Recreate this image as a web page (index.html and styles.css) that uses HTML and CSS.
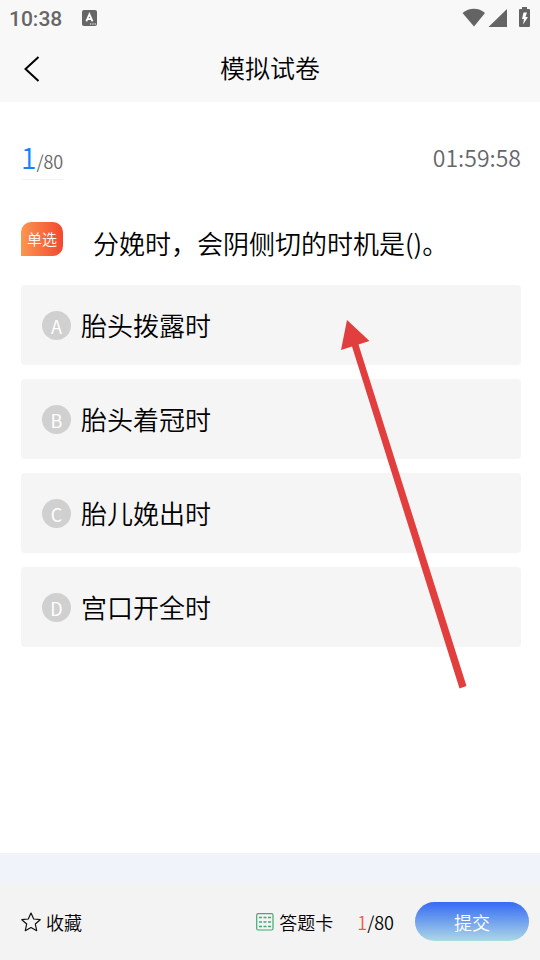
FILE: index.html
```html
<!DOCTYPE html>
<html lang="zh-CN">
  <head>
    <meta charset="utf-8">
    <meta name="viewport" content="width=device-width, initial-scale=1">
    <title>模拟试卷</title>
    <link rel="stylesheet" href="styles.css">
  </head>
  <body>
    <header class="top">
      <div class="status">
        <span class="clock">10:38</span>
        <svg class="keyboard" width="15" height="16" viewBox="0 0 15 16">
          <rect width="15" height="16" rx="2" fill="#666"/>
          <path d="M4.3 11.3 7.4 4.2 10.5 11.3M5.5 9.2H9.3" fill="none" stroke="#fff" stroke-width="1.8"/>
          <path d="M8 14h1.3M10.4 14h1.3M12.6 14h1.3" stroke="#fff" stroke-width="1.2"/>
        </svg>
        <svg class="signals" width="68" height="20" viewBox="0 0 68 20">
          <g fill="#646464">
            <path d="M0.5 5C7-.8 17-.8 23 5L12 18.5z"/>
            <path d="M45 1V19H26.5z"/>
            <path d="M60 -1h5v2h2q1 0 1 1v16q0 1-1 1h-9q-1 0-1-1v-16q0-1 1-1h2z"/>
          </g>
          <path d="M61.5 4.5 60 11H62L61 16.5 66 9H63.5L65 4.5z" fill="#fff"/>
        </svg>
      </div>
      <div class="navbar">
        <button class="back" type="button" aria-label="返回">
          <svg width="16" height="26" viewBox="0 0 16 26">
            <path d="M14.5 1 1.5 13 14.5 25" fill="none" stroke="#000" stroke-width="2"/>
          </svg>
        </button>
        <h1>模拟试卷</h1>
      </div>
    </header>

    <main class="paper">
      <div class="progress">
        <div class="count"><span class="current">1</span>/80</div>
        <div class="timer">01:59:58</div>
      </div>

      <div class="question">
        <span class="badge">单选</span>
        <h2 id="question">分娩时，会阴侧切的时机是()。</h2>
      </div>

      <form class="options" id="answer" role="radiogroup" aria-labelledby="question">
        <label class="option">
          <span class="mark"><input type="radio" name="answer" value="A"><span>A</span></span>
          胎头拨露时
        </label>
        <label class="option">
          <span class="mark"><input type="radio" name="answer" value="B"><span>B</span></span>
          胎头着冠时
        </label>
        <label class="option">
          <span class="mark"><input type="radio" name="answer" value="C"><span>C</span></span>
          胎儿娩出时
        </label>
        <label class="option">
          <span class="mark"><input type="radio" name="answer" value="D"><span>D</span></span>
          宫口开全时
        </label>
      </form>

      <!-- arrow over the options -->
      <svg class="arrow" width="128" height="370" viewBox="0 0 128 370" aria-hidden="true">
        <path d="M7 0 29.5 21 18.5 24.5 126.5 366 119.5 368.5 12 26.5 1 30z" fill="#e33e3e"/>
      </svg>
    </main>

    <footer class="bottom">
      <button class="tool" type="button">
        <svg width="20" height="20" viewBox="0 0 20 20">
          <path d="M10 1 12.7 7 19.2 7.7 14.3 12 15.7 18.7 10 15.5 4.3 18.7 5.7 12 .8 7.7 7.3 7z" fill="none" stroke="#111" stroke-width="1.2" stroke-linejoin="round"/>
        </svg>
        收藏
      </button>
      <button class="tool card" type="button">
        <svg width="18" height="18" viewBox="0 0 18 18">
          <rect x=".7" y=".7" width="16.3" height="16.3" rx="1.5" fill="none" stroke="#42aa74" stroke-width="1.2"/>
          <path d="M3 4.5h12M3 9h12M3 13.5h12" stroke="#42aa74" stroke-width="1.3" stroke-dasharray="3 1.5"/>
        </svg>
        答题卡
      </button>
      <div class="total"><span class="done">1</span>/80</div>
      <button class="submit" type="submit" form="answer">提交</button>
    </footer>
  </body>
</html>
```
FILE: styles.css
```css
* {
  box-sizing: border-box;
}
body {
  margin: 0;
  min-height: 100vh;
  display: flex;
  flex-direction: column;
  background-color: #fff;
  color: #000;
  font-family: "Noto Sans CJK SC", "Noto Sans", sans-serif;
  font-weight: 350;
}
button {
  font: inherit;
  color: inherit;
  border: 0;
  padding: 0;
  background: none;
}
svg {
  display: block;
  flex: none;
  overflow: visible;
}
h1, h2 {
  margin: 0;
  font-weight: inherit;
}

.top {
  background-color: #f8f8f8;
}
.status {
  height: 36px;
  padding: 0 10px 0 9px;
  display: flex;
  align-items: center;
  gap: 20px;
}
.clock {
  font-family: Roboto, sans-serif;
  font-size: 21px;
  font-weight: 500;
  line-height: 24px;
  padding-top: 2px;
  color: #666;
}
.signals {
  margin-left: auto;
}
.navbar {
  height: 66px;
  padding: 0 24px;
  display: grid;
  grid-template-columns: 1fr auto 1fr;
  align-items: center;
}
.navbar h1 {
  font-size: 25px;
  line-height: 36px;
  padding-bottom: 4px;
}
.back {
  justify-self: start;
}

.paper {
  position: relative;
  flex: 1;
  padding: 36px 19px 24px 21px;
}
.progress {
  display: flex;
  justify-content: space-between;
  align-items: flex-start;
}
.count {
  font-size: 18px;
  line-height: 38px;
  height: 42px;
  color: #666;
  border-bottom: 1px solid #f2f2f2;
}
.current {
  font-size: 28px;
  color: #1384ff;
}
.timer {
  font-size: 23px;
  line-height: 38px;
  color: #66676c;
}

.question {
  display: flex;
  align-items: flex-start;
  gap: 30px;
  padding: 42px 0 21px;
}
.badge {
  flex: none;
  width: 42px;
  height: 34px;
  border-radius: 10px 10px 10px 0;
  background: linear-gradient(90deg, #fb9650, #f24830);
  color: #fff;
  font-size: 15px;
  line-height: 34px;
  text-align: center;
}
.question h2 {
  font-size: 26px;
  line-height: 42px;
}

.options {
  display: flex;
  flex-direction: column;
  gap: 14px;
}
.option {
  height: 80px;
  padding: 0 21px;
  display: flex;
  align-items: center;
  gap: 10px;
  border-radius: 4px;
  background-color: #f5f5f5;
  font-size: 26px;
  line-height: 38px;
}
.mark {
  display: grid;
  place-items: center;
  color: #fff;
  font-size: 18px;
  font-weight: 400;
  line-height: 28px;
}
.mark > * {
  grid-area: 1 / 1;
}
.mark span {
  padding-top: 1px;
}
.mark input {
  appearance: none;
  width: 29px;
  height: 29px;
  margin: 0;
  border-radius: 50%;
  background-color: #d0d0d0;
}
.mark input:checked {
  background-color: #1384ff;
}

.arrow {
  position: absolute;
  top: 218px;
  left: 340px;
  pointer-events: none;
}

.bottom {
  border-top: 29px solid #f0f4fa;
  padding: 20px 11px 19px 21px;
  display: flex;
  align-items: center;
  background-color: #f3f3f3;
  font-size: 18px;
}
.tool {
  display: flex;
  align-items: center;
  gap: 5px;
}
.card {
  margin-left: auto;
}
.total {
  margin: 0 21px 0 24px;
}
.done {
  color: #f15845;
}
.submit {
  width: 114px;
  height: 39px;
  border-radius: 20px;
  background: linear-gradient(#356af6, #add8e6);
  color: #fff;
}
```
